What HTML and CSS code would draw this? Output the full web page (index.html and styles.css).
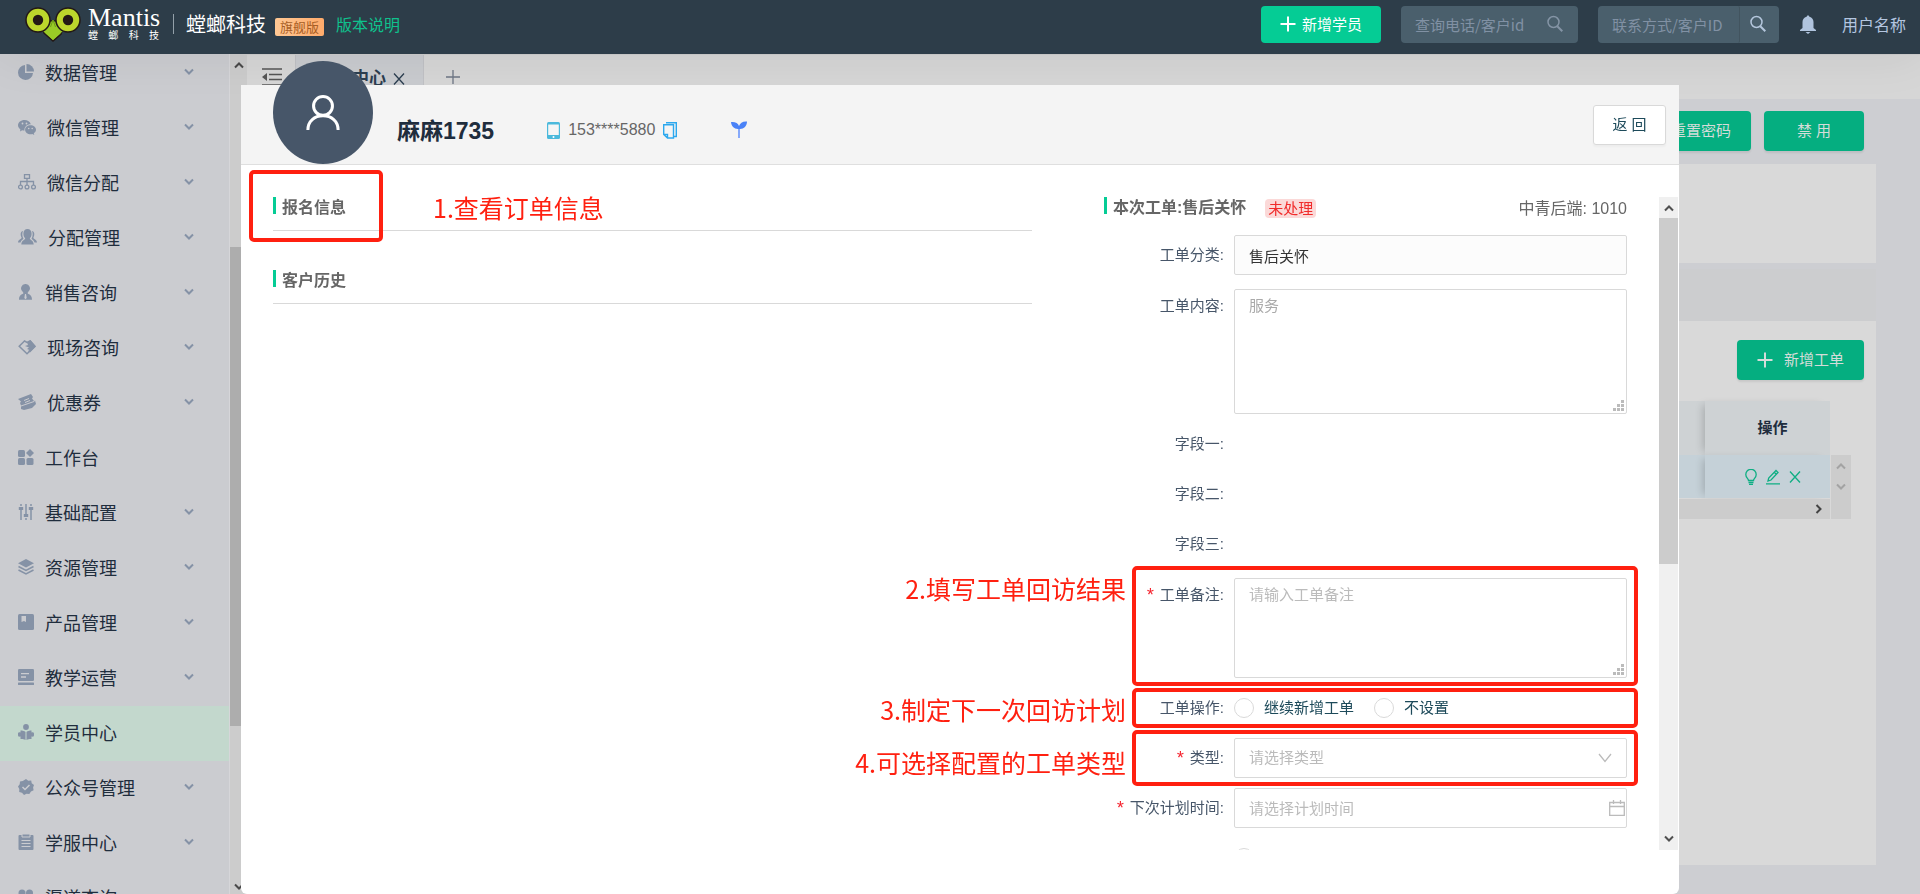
FILE: index.html
```
<!DOCTYPE html>
<html lang="zh-CN">
<head>
<meta charset="utf-8">
<title>螳螂科技</title>
<link rel="stylesheet" href="styles.css">
</head>
<body>
<svg class="defs" aria-hidden="true">
  <symbol id="down" viewBox="0 0 10 8"><path d="M1 1.5l4 4 4-4" fill="none" stroke="currentColor" stroke-width="2"/></symbol>
  <symbol id="up" viewBox="0 0 10 8"><path d="M1 6.5l4-4 4 4" fill="none" stroke="currentColor" stroke-width="2"/></symbol>
  <symbol id="plus" viewBox="0 0 16 16"><path d="M8 0.5v15M0.5 8h15" fill="none" stroke="currentColor" stroke-width="2"/></symbol>
  <symbol id="search" viewBox="0 0 18 18"><circle cx="7.5" cy="7" r="5.5" fill="none" stroke="currentColor" stroke-width="1.5"/><path d="M11.3 11.2l5 5" stroke="currentColor" stroke-width="2"/></symbol>
  <symbol id="close" viewBox="0 0 12 12"><path d="M1 .5l10 11M11 .5L1 11.5" fill="none" stroke="currentColor" stroke-width="1.3"/></symbol>
  <symbol id="grip" viewBox="0 0 11 11"><path d="M8 0h3v3H8zM4 4h3v3H4zM8 4h3v3H8zM0 8h3v3H0zM4 8h3v3H4zM8 8h3v3H8z" fill="#bbb"/></symbol>
</svg>

<header class="topbar">
  <svg class="logo" viewBox="0 0 56 36" aria-hidden="true">
    <path d="M16 15h24l-4 13-8 7-9-8z" fill="#8ec21f" stroke="#231815" stroke-width="1.5"/>
    <path d="M18 25l10-11 10 11-10 9z" fill="#9acb26"/>
    <path d="M25.500 21l2.500-7 2.500 7" fill="none" stroke="#6c9a18" stroke-width="1"/>
    <circle cx="13" cy="14" r="12" fill="#bcd62c" stroke="#231815" stroke-width="1.500"/>
    <circle cx="43" cy="14" r="12" fill="#bcd62c" stroke="#231815" stroke-width="1.500"/>
    <circle cx="13" cy="14" r="5.200" fill="#231815"/><circle cx="43" cy="14" r="5.200" fill="#231815"/>
  </svg>
  <div class="brand"><span class="brand-en">Mantis</span><span class="brand-cn"><i>螳</i><i>螂</i><i>科</i><i>技</i></span></div>
  <span class="brand-name">螳螂科技</span>
  <span class="edition">旗舰版</span>
  <a class="version" href="#">版本说明</a>
  <button class="add-student" type="button"><svg width="16" height="16"><use href="#plus"/></svg>新增学员</button>
  <label class="search s1"><input type="text" aria-label="查询电话/客户id" placeholder="查询电话/客户id"><svg width="18" height="18"><use href="#search"/></svg></label>
  <label class="search s2"><input type="text" aria-label="联系方式/客户ID" placeholder="联系方式/客户ID"><svg width="18" height="18"><use href="#search"/></svg></label>
  <svg class="bell" viewBox="0 0 16 19" aria-hidden="true"><path d="M8 0l1.500 1.800C12 2.500 13.500 4.500 13.500 7v6L16 15v1H0v-1l2.500-2V7C2.500 4.500 4 2.500 6.500 1.800zM5.500 17h5L8 19z" fill="currentColor"/></svg>
  <span class="user">用户名称</span>
</header>

<div class="shell">
  <nav class="sidebar">
    <a href="#"><svg viewBox="0 0 16 16" width="16"><path d="M7 1a7.500 7.500 0 1 0 8 8H7z"/><path d="M8.500 0A7.500 7.500 0 0 1 16 7.500H8.500z"/></svg>数据管理<svg class="chev"><use href="#down"/></svg></a>
    <a href="#"><svg viewBox="0 0 18 16" width="18"><path d="M6.500 1C3 1 0 3.300 0 6.300c0 1.700 1 3.200 2.400 4.200L2 12.500l2.200-1.200c.7.200 1.500.3 2.300.3-.5-3.600 2.500-6.300 6.300-6.300C12.200 2.800 9.600 1 6.500 1z"/><path d="M12.500 6.300c-3 0-5.400 2-5.400 4.500s2.400 4.500 5.400 4.500c.6 0 1.200-.1 1.800-.2l2 .9-.5-1.700c1.300-.8 2.200-2.100 2.200-3.500 0-2.500-2.500-4.500-5.500-4.500z"/><g fill="#cbccd0"><circle cx="4.500" cy="4.500" r=".9"/><circle cx="8.500" cy="4.500" r=".9"/><circle cx="10.700" cy="9.500" r=".8"/><circle cx="14.200" cy="9.500" r=".8"/></g></svg>微信管理<svg class="chev"><use href="#down"/></svg></a>
    <a href="#"><svg viewBox="0 0 18 16" width="18"><g fill="none" stroke="currentColor" stroke-width="1.300"><path d="M6.500.7h5v3.600h-5zM9 4.300V11M2.500 11V7.500h13V11"/><circle cx="2.500" cy="13" r="1.900"/><circle cx="9" cy="13" r="1.900"/><circle cx="15.500" cy="13" r="1.900"/></g></svg>微信分配<svg class="chev"><use href="#down"/></svg></a>
    <a href="#"><svg viewBox="0 0 19 16" width="19"><path d="M9.500 0C7 0 5.400 2 5.400 4.700c0 2 .8 3.600 1.800 4.500-.3 2-3.700 1.800-3.900 6.300h12.400c-.2-4.500-3.600-4.300-3.900-6.300 1-.9 1.800-2.500 1.800-4.500C13.600 2 12 0 9.500 0z"/><path d="M5 2C2.500 2 2 6 3.600 8.500 3.300 10.500.3 10 0 13.500h2.500c.5-2 2-3 3-3.800C4 7 4 4 5 2zM14 2c2.500 0 3 4 1.400 6.500.3 2 3.300 1.500 3.600 5h-2.500c-.5-2-2-3-3-3.800C15 7 15 4 14 2z"/></svg>分配管理<svg class="chev"><use href="#down"/></svg></a>
    <a href="#"><svg viewBox="0 0 16 16" width="16"><path d="M7.500 0a4.300 4.300 0 0 0-3 7.500l1 1.500C5 10.500 1 10 1 15.700h13C14 10 10 10.500 9.500 9l1-1.500a4.300 4.300 0 0 0-3-7.500z"/><path d="M7 10h1l.7 4-1.200 1.300L6.300 14z" fill="#cbccd0"/></svg>销售咨询<svg class="chev"><use href="#down"/></svg></a>
    <a href="#"><svg viewBox="0 0 18 16" width="18"><path d="M5.500 3L1.200 7.300l7.800 7.400 7.800-7.400L12 2 9 3.500 6.500 2z" fill="none" stroke="currentColor" stroke-width="1.500"/><path d="M9 3.500L12.500 1 18 7.500l-6 6-2-1.500 1.500-1-2.500-1 2-1.500L7 7l3-1z"/></svg>现场咨询<svg class="chev"><use href="#down"/></svg></a>
    <a href="#"><svg viewBox="0 0 18 16" width="18"><path d="M0 5L13 0l2 3-1 1.500 2 2.500-13 4.500L2 9l1-1.500z"/><path d="M3 12.500l13-4.500 1-1.500 1 3.500-4 4-8 2-3-1z"/><path d="M6 6.500l5-2M7 8.500l5-2" stroke="#cbccd0" fill="none"/></svg>优惠券<svg class="chev"><use href="#down"/></svg></a>
    <a href="#"><svg viewBox="0 0 16 16" width="16"><rect x="0" y="1" width="7" height="7" rx="1.500"/><path d="M12 0l4 4-4 4-4-4z"/><rect x="0" y="9" width="7" height="7" rx="1.500"/><rect x="8.500" y="9" width="7" height="7" rx="1.500"/></svg>工作台</a>
    <a href="#"><svg viewBox="0 0 16 16" width="16"><g fill="none" stroke="currentColor" stroke-width="1.500"><path d="M3 0v2M3 4v12M8 0v10M8 14v2M13 0v2M13 4v12"/></g><path d="M.8 3h4.400v3H.8zM5.800 10h4.400v3H5.800zM10.800 3h4.400v3h-4.400z"/></svg>基础配置<svg class="chev"><use href="#down"/></svg></a>
    <a href="#"><svg viewBox="0 0 16 16" width="16"><path d="M8 0l8 4.200-8 4.300-8-4.300z"/><path d="M.5 7.500L8 11.500l7.500-4M.5 11L8 15l7.500-4" fill="none" stroke="currentColor" stroke-width="1.500"/></svg>资源管理<svg class="chev"><use href="#down"/></svg></a>
    <a href="#"><svg viewBox="0 0 16 16" width="16"><rect width="16" height="16" rx="1.500"/><path d="M3.500 2H8v6L6 7 3.500 8z" fill="#cbccd0"/></svg>产品管理<svg class="chev"><use href="#down"/></svg></a>
    <a href="#"><svg viewBox="0 0 16 16" width="16"><rect width="16" height="12" rx="1.200"/><rect y="13.500" width="16" height="2.500" rx=".6"/><path d="M3 4.700h8M3 8h5" stroke="#cbccd0" stroke-width="1.300"/></svg>教学运营<svg class="chev"><use href="#down"/></svg></a>
    <a href="#" class="on"><svg viewBox="0 0 16 16" width="16"><circle cx="8" cy="3" r="2.900"/><path d="M7.500 8v8C5 14.500 3 15 2.500 15V12.500C0 13 0 12 0 10.500S0 8 2.500 8.500V6.500c2 0 4 .5 5 1.500zM8.500 8v8c2.500-1.500 4.500-1 5-1v-2.500c2.500.5 2.500-.5 2.500-2s0-2.500-2.500-2V6.500c-2 0-4 .5-5 1.500z"/></svg>学员中心</a>
    <a href="#"><svg viewBox="0 0 16 16" width="16"><path d="M8 0l2.300 1.700 2.900-.2.500 2.800L16 6l-.9 2.500.5 2.800-2.600 1.200L11.300 15 8.500 14.800 6 16l-2-2.200-2.800-.8.100-2.900L0 7.600l1.700-2.300.3-2.900 2.800-.4z"/><path d="M4.500 8l2.500 2.500 4.500-4.500" fill="none" stroke="#cbccd0" stroke-width="1.500"/></svg>公众号管理<svg class="chev"><use href="#down"/></svg></a>
    <a href="#"><svg viewBox="0 0 16 16" width="16"><rect x=".5" y="1" width="15" height="15" rx="1"/><path d="M4 0h8v3H4z" stroke="#cbccd0"/><path d="M3.500 6.500h9M3.500 9.500h9M3.500 12.500h9" stroke="#cbccd0" stroke-width="1.200"/></svg>学服中心<svg class="chev"><use href="#down"/></svg></a>
    <a href="#"><svg viewBox="0 0 16 16" width="16"><circle cx="4" cy="4" r="3.500"/><circle cx="11.500" cy="4" r="3.500"/><circle cx="4" cy="12" r="3.500"/></svg>渠道查询</a>
  </nav>
  <div class="side-scroll"><svg><use href="#up"/></svg><span></span><svg><use href="#down"/></svg></div>

  <main class="main">
    <div class="tabs">
      <svg class="fold" viewBox="0 0 20 18" aria-hidden="true"><path d="M0 1h20M7 6.500h13M7 11.500h13M0 17h20" stroke="#555" stroke-width="1.500"/><path d="M5 5v8L0 9z" fill="#555"/></svg>
      <div class="tab">学员中心<svg width="12" height="12"><use href="#close"/></svg></div>
      <svg class="new-tab" width="14" height="14" viewBox="0 0 14 14"><path d="M7 0v14M0 7h14" stroke="currentColor" stroke-width="1.300"/></svg>
    </div>
    <div class="page">
      <div class="page-actions"><button type="button" class="green">重置密码</button><button type="button" class="green">禁 用</button></div>
      <div class="panel"></div>
      <div class="strip"></div>
      <div class="orders">
        <button type="button" class="green add"><svg width="16" height="16"><use href="#plus"/></svg>新增工单</button>
        <div class="grid">
          <table>
            <thead><tr><th></th><th class="ops">操作</th></tr></thead>
            <tbody><tr><td></td><td class="ops"><div class="op-icons">
              <svg width="12" height="16" viewBox="0 0 12 16"><path d="M3.500 11.500C3.500 9.500.8 9 .8 5.500a5.200 5.200 0 0 1 10.400 0c0 3.500-2.700 4-2.700 6zM3.500 13.500h5M4 15.300h4"/></svg>
              <svg width="14" height="16" viewBox="0 0 14 16"><path d="M2 12l.7-3L10 1.500l2 2L5 11zM0 14.800h14M8.500 3.500l2 2"/></svg>
              <svg width="12" height="12"><use href="#close"/></svg></div></td></tr></tbody>
          </table>
          <div class="vbar"><svg><use href="#up"/></svg><svg><use href="#down"/></svg></div>
          <div class="hbar"><svg width="8" height="10" viewBox="0 0 8 10"><path d="M1.500 1l4 4-4 4" fill="none" stroke="#444" stroke-width="2"/></svg></div>
        </div>
      </div>
    </div>
  </main>
</div>

<section class="drawer" role="dialog" aria-label="麻麻1735">
  <div class="drawer-head">
    <div class="avatar"><svg viewBox="0 0 36 38" aria-hidden="true"><g fill="none" stroke="#fff" stroke-width="3.200"><circle cx="18" cy="12" r="10"/><path d="M2 37.500C2 28 9 22.500 18 22.500S34 28 34 37.500"/></g></svg></div>
    <h1>麻麻1735</h1>
    <div class="phone">
      <svg width="13" height="17" viewBox="0 0 13 17"><rect width="13" height="17" rx="1.500" fill="#4bb9dc"/><path d="M1.200 2.500h10.600v10.500H1.200z" fill="#f5f5f5"/><circle cx="6.500" cy="15" r="1" fill="#fff"/></svg>
      <span>153****5880</span>
      <svg width="14" height="17" viewBox="0 0 14 17"><g fill="none" stroke="#2ca8ee" stroke-width="1.400"><path d="M3.500 2.700h7V16h-6L.7 12.500V2.700h3zM.7 12.500h3.800V16"/><path d="M3 .7h10.300v13.800H11"/></g></svg>
    </div>
    <svg class="sprout" viewBox="0 0 16 17" aria-hidden="true"><path d="M0 1c4-.5 7 1 8 4 1-3 4-5 8-4.500C16 5 13 8 9 8v1H7V8C3 8 .3 5 0 1z" fill="#4a82f7"/><path d="M7 8h2v9H7z" fill="#86a9fa"/></svg>
    <button type="button" class="back">返 回</button>
  </div>
  <div class="drawer-body">
    <div class="left">
      <section class="block marked-block"><h2>报名信息</h2><span class="note note-1">1.查看订单信息</span></section>
      <section class="block"><h2>客户历史</h2></section>
    </div>
    <div class="right">
      <form class="form">
        <div class="form-head"><h2>本次工单:售后关怀</h2><span class="status">未处理</span><span class="owner">中青后端: 1010</span></div>
        <div class="row"><label for="cat">工单分类:</label><input id="cat" class="readonly" type="text" value="售后关怀" readonly></div>
        <div class="row tall"><label for="content">工单内容:</label><div class="field"><textarea id="content" class="content" placeholder="服务"></textarea><svg class="grip" width="11" height="11"><use href="#grip"/></svg></div></div>
        <div class="row"><span class="lab">字段一:</span></div>
        <div class="row"><span class="lab">字段二:</span></div>
        <div class="row"><span class="lab">字段三:</span></div>
        <div class="row tall marked m2"><span class="note">2.填写工单回访结果</span><label for="remark" class="req">工单备注:</label><div class="field"><textarea id="remark" class="remark" placeholder="请输入工单备注"></textarea><svg class="grip" width="11" height="11"><use href="#grip"/></svg></div></div>
        <div class="row marked m3"><span class="note">3.制定下一次回访计划</span><span class="lab">工单操作:</span><div class="radios"><label><input type="radio" name="op">继续新增工单</label><label><input type="radio" name="op">不设置</label></div></div>
        <div class="row marked m4"><span class="note">4.可选择配置的工单类型</span><label for="type" class="req">类型:</label><div class="field"><select id="type"><option>请选择类型</option></select><svg class="caret" width="14" height="10" viewBox="0 0 14 10"><path d="M1 1l6 7.500L13 1" fill="none" stroke="#bbb" stroke-width="1.300"/></svg></div></div>
        <div class="row"><label for="time" class="req">下次计划时间:</label><div class="field"><input id="time" type="text" placeholder="请选择计划时间"><svg class="cal" width="16" height="16" viewBox="0 0 16 16"><path d="M.7 2.500h14.600v12.800H.7zM.7 6.500h14.600M4.500 0v4M11.500 0v4" fill="none" stroke="#bbb" stroke-width="1.300"/></svg></div></div>
        <div class="row"><span class="lab"></span><div class="radios"><input type="radio" aria-label="提醒"></div></div>
      </form>
      <div class="form-scroll"><svg><use href="#up"/></svg><span></span><svg><use href="#down"/></svg></div>
    </div>
  </div>
</section>
</body>
</html>
```
FILE: styles.css
```
*, *::before, *::after { box-sizing: border-box; }
html, body { height: 100%; margin: 0; }
body {
  display: flex;
  flex-direction: column;
  overflow: hidden;
  background: #cdced2;
  color: #1f2d3d;
  font: 15px/20px "Liberation Sans", "Noto Sans CJK SC", sans-serif;
}
button, input, textarea, select { font: inherit; color: inherit; }
input, textarea, select { outline: 0; border-radius: 2px; }
button { cursor: pointer; }
a { color: inherit; text-decoration: none; }
h1, h2 { margin: 0; }
svg { flex: none; }
.defs { position: absolute; width: 0; height: 0; }

/* Top bar */
.topbar {
  position: relative;
  z-index: 2;
  display: flex;
  flex: none;
  align-items: center;
  height: 54px;
  padding: 0 14px 6px 25px;
  background: #2d3d49;
  color: #fff;
  font-family: "Noto Sans CJK SC", sans-serif;
  box-shadow: 0 0 50px rgba(0, 0, 0, .08);
}
.logo { width: 56px; height: 36px; }
.brand { display: flex; flex-direction: column; width: 71px; margin-left: 7px; }
.brand-en { font: 26px/22px "Liberation Serif", serif; }
.brand-cn { display: flex; justify-content: space-between; font-size: 10px; line-height: 12px; }
.brand-cn i { font-style: normal; }
.brand-name { margin-left: 14px; padding-left: 12px; border-left: 1px solid #93a0a9; font-size: 20px; line-height: 20px; }
.edition {
  margin: 5px 12px 0 9px;
  padding: 0 5px;
  border-radius: 2px;
  background: linear-gradient(90deg, #ffc894, #ffab6b);
  color: #a85e25;
  font-size: 13px;
  line-height: 18px;
}
.version { color: #0fc28d; font-size: 16px; }
.add-student {
  display: flex;
  align-items: center;
  justify-content: center;
  gap: 6px;
  width: 120px;
  height: 37px;
  margin-left: auto;
  padding: 0;
  border: 0;
  border-radius: 4px;
  background: #05cc95;
}
.search {
  display: flex;
  align-items: center;
  height: 37px;
  border-radius: 4px;
  background: #4a5f6c;
  color: #8494a5;
}
.search input::placeholder { color: #8191a4; opacity: 1; }
.s1 { width: 177px; margin-left: 20px; padding-right: 14px; }
.s2 { width: 181px; margin-left: 20px; padding-right: 12px; color: #b4c6dc; }
.s2 svg { margin-left: 9px; }
.bell { width: 16px; height: 19px; margin: 0 26px 0 21px; color: #b0c4de; }
.user { color: #b4c6e0; font-size: 16px; }

.shell { display: flex; flex: 1; min-height: 0; }

/* Side menu */
.sidebar {
  flex: none;
  width: 230px;
  overflow: hidden;
  border-right: 1px solid #d6d6d9;
  background: #cbccd0;
  font-family: "Noto Sans CJK SC", sans-serif;
}
.sidebar a { display: flex; align-items: center; gap: 11px; height: 55px; padding: 0 35px 3px 18px; font-size: 18px; }
.sidebar a:first-child { margin-top: -8px; }
.sidebar .on { background: #c3d8cd; }
.sidebar svg { height: 16px; color: #8592a6; fill: #8592a6; }
.sidebar .chev { width: 10px; height: 8px; margin-left: auto; }
.side-scroll {
  display: flex;
  flex: none;
  flex-direction: column;
  align-items: center;
  justify-content: space-between;
  width: 17px;
  padding: 7px 0 3px;
  background: #ccc;
  color: #4a4a4a;
  position: relative;
}
.side-scroll svg, .form-scroll svg { width: 10px; height: 8px; }
.side-scroll span { position: absolute; top: 23%; width: 100%; height: 57%; background: #adadad; }

/* Page behind the drawer */
.main { flex: 1; min-width: 0; }
.tabs { display: flex; align-items: center; height: 45px; background: #d6d6d6; border-top: 1px solid #cdcdcd; }
.fold { width: 20px; height: 18px; margin: 0 13px 0 15px; }
.tab {
  display: flex;
  align-items: center;
  justify-content: flex-end;
  gap: 7px;
  align-self: stretch;
  width: 129px;
  padding: 4px 18px 0 0;
  border: 1px solid #c0c1c5;
  border-width: 0 1px;
  background: #c9cbcf;
  color: #2c3e50;
  font-size: 17px;
  font-weight: 700;
}
.new-tab { margin-left: 22px; color: #6d7684; }
.page { padding: 12px 44px 0 12px; }
.page-actions { display: flex; justify-content: flex-end; gap: 13px; padding: 0 12px 13px 0; }
.green {
  min-width: 100px;
  height: 40px;
  padding: 0 20px;
  border: 0;
  border-radius: 4px;
  background: #05ae80;
  color: #d4dcd9;
  box-shadow: 0 2px 2px rgba(0, 0, 0, .08);
}
.panel { height: 99px; background: #d9d9d9; }
.strip { height: 52px; margin-top: 6px; background: #cccdcf; }
.orders { display: flex; flex-direction: column; gap: 21px; min-height: 544px; padding: 19px 25px 0 12px; background: #d9d9d9; }
.add { display: flex; align-self: flex-end; align-items: center; gap: 11px; margin-right: -13px; }
.grid { display: grid; grid-template-columns: 1fr 20px; gap: 1px; }
table { width: 100%; border-collapse: collapse; table-layout: fixed; background: #ced2d4; }
th, td { padding: 0; text-align: center; }
thead tr { height: 54px; }
tbody tr { height: 43px; background: #c5d1d8; }
th.ops, td.ops { width: 125px; box-shadow: -6px 0 8px -4px rgba(0, 0, 0, .18); }
th.ops { padding-left: 10px; }
.op-icons { display: flex; align-items: center; justify-content: center; gap: 9px; padding-left: 10px; color: #0fae83; }
.op-icons path { fill: none; stroke: #0fae83; stroke-width: 1.3; }
.vbar {
  display: flex;
  flex-direction: column;
  align-items: center;
  gap: 13px;
  grid-column: 2;
  grid-row: 1 / 3;
  margin-top: 54px;
  padding-top: 7px;
  background: #ccc;
  color: #a3a3a3;
}
.vbar svg { width: 10px; height: 8px; }
.hbar { display: flex; align-items: center; justify-content: flex-end; grid-row: 2; height: 20px; padding-right: 7px; background: #ccc; }

/* Drawer */
.drawer {
  position: fixed;
  z-index: 3;
  top: 85px;
  right: 241px;
  bottom: 0;
  left: 241px;
  display: flex;
  flex-direction: column;
  border-radius: 0 0 6px 6px;
  background: #fff;
}
.drawer-head { display: flex; align-items: center; height: 80px; padding: 0 13px 0 32px; border-bottom: 1px solid #dfdfdf; background: #f4f4f4; }
.avatar {
  display: flex;
  align-items: center;
  justify-content: center;
  align-self: flex-end;
  flex: none;
  width: 100px;
  height: 103px;
  border-radius: 50%;
  background: #475669;
}
.avatar svg { width: 34px; height: 37px; }
h1 { margin: 12px 0 0 24px; font-size: 23px; line-height: 28px; }
.phone { display: flex; align-items: center; gap: 8px; margin: 11px 0 0 53px; color: #666; font-size: 16px; }
.sprout { width: 16px; height: 17px; margin: 10px 0 0 54px; }
.back {
  align-self: flex-start;
  width: 73px;
  height: 40px;
  margin: 20px 0 0 auto;
  padding: 0;
  border: 1px solid #d9d9d9;
  border-radius: 3px;
  background: #fff;
  color: #1d4a5a;
  box-shadow: 0 2px 2px rgba(0, 0, 0, .03);
}
.drawer-body {
  display: grid;
  flex: 1;
  grid-template-columns: 1fr 574px;
  gap: 72px;
  min-height: 0;
  padding: 32px 1px 44px 32px;
}
h2 { position: relative; padding: 1px 0 0 9px; color: #666; font-size: 16px; font-weight: 700; }
h2::before { content: ""; position: absolute; top: 0; left: 0; width: 3px; height: 17px; background: #05cc95; }
.block { position: relative; height: 34px; margin-bottom: 39px; border-bottom: 1px solid #d9d9d9; }
.right { display: flex; min-height: 0; clip-path: inset(0 0 0 -300px); }
.form { display: flex; flex: 1; flex-direction: column; gap: 10px; min-width: 0; height: 0; margin: 0 32px 0 0; }
.form-head { display: flex; flex: none; align-items: flex-start; height: 28px; color: #666; font-size: 16px; }
.status { margin: 2px 0 0 19px; padding: 0 3px; border-radius: 4px; background: #fbd9d8; color: #f02b2b; font-size: 15px; line-height: 19px; }
.owner { margin: 2px 0 0 auto; }
.row { position: relative; display: grid; flex: none; grid-template-columns: 120px 1fr; gap: 10px; min-height: 40px; align-items: center; }
.row > label, .lab { color: #475669; text-align: right; }
.req::before { content: "*"; margin-right: 4px; color: #f5222d; font: 18px/16px "Liberation Mono", monospace; vertical-align: middle; }
.tall { margin-top: 4px; align-items: start; }
.tall > label { padding-top: 7px; }
.field { position: relative; display: flex; }
input[type="text"], select, textarea { width: 100%; height: 40px; padding: 0 14px; border: 1px solid #d9d9d9; background: #fff; }
.row .readonly { background: #fcfcfc; color: #333; }
textarea { display: block; padding-top: 6px; resize: none; }
textarea.content { height: 125px; }
textarea.remark { height: 100px; }
textarea::placeholder, .field input::placeholder { color: #bbb; opacity: 1; }
.content::placeholder { color: #aaa; }
select { appearance: none; color: #bbb; }
.search input[type="text"] { flex: 1; min-width: 0; height: 37px; padding: 0 0 0 14px; border: 0; background: none; }
.search.s2 input[type="text"] { border-right: 1px solid #42545f; }
.grip { position: absolute; right: 3px; bottom: 3px; }
.caret { position: absolute; top: 15px; right: 15px; }
.cal { position: absolute; top: 12px; right: 2px; }
.radios { display: flex; gap: 20px; color: #1d4a5a; }
.radios label { display: flex; align-items: center; gap: 10px; }
.radios input { appearance: none; width: 20px; height: 20px; margin: 0; border: 1px solid #d9d9d9; border-radius: 50%; background: #fff; }
.form-scroll {
  position: relative;
  display: flex;
  flex: none;
  flex-direction: column;
  align-items: center;
  justify-content: space-between;
  width: 19px;
  padding: 7px 0;
  background: #f0f0f0;
  color: #505050;
}
.form-scroll span { position: absolute; top: 21px; width: 100%; height: 53%; background: #ccc; }

/* Numbered call-outs */
.note { position: absolute; right: calc(100% - 22px); top: 0; color: #ff2010; font: 25px/30px "Noto Sans CJK SC", sans-serif; white-space: nowrap; }
.note-1 { right: auto; left: 160px; top: -5px; }
.marked::after, .marked-block::after {
  content: "";
  position: absolute;
  border: 4px solid #ff2010;
  border-radius: 5px;
  pointer-events: none;
}
.marked-block::after { top: -27px; left: -24px; width: 134px; height: 72px; }
.marked::after { top: 0; right: -11px; bottom: 0; left: 28px; }
.m2::after { top: -12px; bottom: -8px; }
.m4::after { top: -8px; bottom: -8px; }
.m2 .note { top: -5px; }
.m3 .note { top: 6px; }
.m4 .note { top: 9px; }
```
